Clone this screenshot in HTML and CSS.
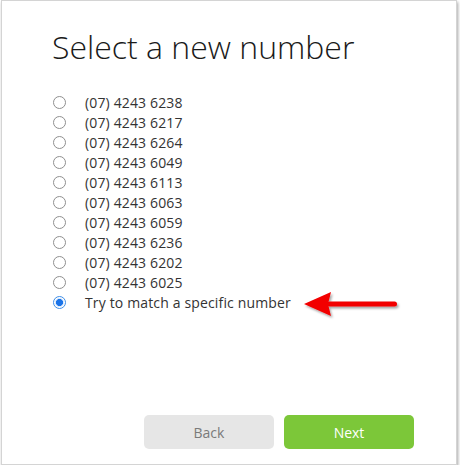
FILE: index.html
```html
<!DOCTYPE html>
<html>
<head>
<meta charset="utf-8">
<link rel="stylesheet" href="styles.css">
</head>
<body>
<div class="frame">
  <h1 class="title">Select a new number</h1>
  <ul class="options">
    <li class="option"><span class="radio"></span><span class="label">(07) 4243 6238</span></li>
    <li class="option"><span class="radio"></span><span class="label">(07) 4243 6217</span></li>
    <li class="option"><span class="radio"></span><span class="label">(07) 4243 6264</span></li>
    <li class="option"><span class="radio"></span><span class="label">(07) 4243 6049</span></li>
    <li class="option"><span class="radio"></span><span class="label">(07) 4243 6113</span></li>
    <li class="option"><span class="radio"></span><span class="label">(07) 4243 6063</span></li>
    <li class="option"><span class="radio"></span><span class="label">(07) 4243 6059</span></li>
    <li class="option"><span class="radio"></span><span class="label">(07) 4243 6236</span></li>
    <li class="option"><span class="radio"></span><span class="label">(07) 4243 6202</span></li>
    <li class="option"><span class="radio"></span><span class="label">(07) 4243 6025</span></li>
    <li class="option"><span class="radio checked"></span><span class="label">Try to match a specific number</span></li>
  </ul>
  <div class="actions">
    <button class="btn btn-back">Back</button>
    <button class="btn btn-next">Next</button>
  </div>
  <svg class="arrow" width="110" height="40" viewBox="0 0 110 40">
    <defs>
      <filter id="sh" x="-20%" y="-50%" width="140%" height="200%">
        <feDropShadow dx="1.5" dy="2" stdDeviation="1.2" flood-color="#000" flood-opacity="0.35"/>
      </filter>
    </defs>
    <g filter="url(#sh)">
      <polygon points="3,16 30,4 27,16 30,28" fill="#f20000"/>
      <rect x="26" y="13.5" width="70" height="5" rx="2.5" fill="#f20000"/>
    </g>
  </svg>
</div>
</body>
</html>
```
FILE: styles.css
```css
html, body {
  margin: 0;
  padding: 0;
  background: #ffffff;
}
body {
  font-family: "Open Sans", "Liberation Sans", sans-serif;
}
.frame {
  position: relative;
  box-sizing: border-box;
  margin-left: 1px;
  width: 456px;
  height: 465px;
  border: 1px solid #d4d4d4;
  background: #fff;
  box-shadow: 1px 2px 3px rgba(0, 0, 0, 0.35);
  display: flex;
  flex-direction: column;
  padding: 0 42px 15px 51px;
}
.title {
  margin: 24px 0 0 -1px;
  font-weight: 300;
  font-size: 32px;
  line-height: 44px;
  color: #1a1a1a;
}
.options {
  list-style: none;
  margin: 24px 0 0 0;
  padding: 0;
}
.option {
  display: flex;
  align-items: center;
  height: 20px;
}
.radio {
  box-sizing: border-box;
  width: 13px;
  height: 13px;
  border-radius: 50%;
  border: 1px solid #8f8f8f;
  background: #fff;
  margin-right: 19px;
  flex: none;
  position: relative;
  top: -1px;
}
.radio.checked {
  border-color: #3e8de6;
  background: radial-gradient(circle, #1a73e8 0, #1a73e8 3.2px, #cfe3fb 3.8px, #ffffff 5px);
}
.label {
  font-size: 14px;
  line-height: 20px;
  color: #333;
  letter-spacing: 0.15px;
}
.actions {
  margin-top: auto;
  display: flex;
  justify-content: flex-end;
  gap: 10px;
}
.btn {
  width: 130px;
  height: 34px;
  border: none;
  border-radius: 5px;
  font-family: "Open Sans", "Liberation Sans", sans-serif;
  font-size: 14px;
  padding: 0;
}
.btn-back {
  background: #e6e6e6;
  color: #7a7a7a;
}
.btn-next {
  background: #7cc739;
  color: #ffffff;
}
.arrow {
  position: absolute;
  left: 299px;
  top: 287px;
}
```
